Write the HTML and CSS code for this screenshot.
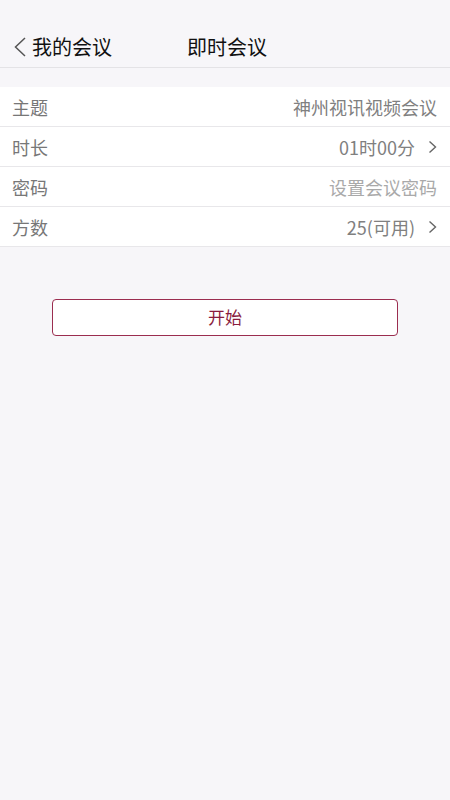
FILE: index.html
```html
<!DOCTYPE html>
<html lang="zh">
<head>
<meta charset="utf-8">
<title>即时会议</title>
<link rel="stylesheet" href="styles.css">
</head>
<body>
<div class="page">
  <header class="nav">
    <div class="back">
      <svg class="back-icon" width="14" height="22" viewBox="0 0 14 22"><path d="M12 2 L2.5 11 L12 20" fill="none" stroke="#555" stroke-width="1.5"/></svg>
      <span>我的会议</span>
    </div>
    <div class="title">即时会议</div>
  </header>
  <div class="list">
    <div class="row"><span class="label">主题</span><span class="value">神州视讯视频会议</span></div>
    <div class="row"><span class="label">时长</span><span class="value">01时00分<svg class="chev" width="9" height="14" viewBox="0 0 9 14"><path d="M1.5 1.5 L7.5 7 L1.5 12.5" fill="none" stroke="#666" stroke-width="1.4"/></svg></span></div>
    <div class="row"><span class="label">密码</span><span class="value placeholder">设置会议密码</span></div>
    <div class="row"><span class="label">方数</span><span class="value">25(可用)<svg class="chev" width="9" height="14" viewBox="0 0 9 14"><path d="M1.5 1.5 L7.5 7 L1.5 12.5" fill="none" stroke="#666" stroke-width="1.4"/></svg></span></div>
  </div>
  <div class="actions">
    <button class="start">开始</button>
  </div>
</div>
</body>
</html>
```

FILE: styles.css
```css
html, body {
  margin: 0;
  padding: 0;
  background: #f7f6f9;
}
body {
  font-family: "Noto Sans CJK SC", "Noto Sans", sans-serif;
  width: 450px;
  height: 800px;
}
.page {
  display: flex;
  flex-direction: column;
}
.nav {
  border-bottom: 1px solid #e4e3e6;
  display: flex;
  align-items: center;
  padding-top: 26px;
  box-sizing: border-box;
  height: 68px;
}
.back {
  display: flex;
  align-items: center;
  padding-left: 13px;
  font-size: 20px;
  color: #111;
  gap: 5px;
}
.back-icon {
  display: block;
}
.title {
  margin-left: 75px;
  font-size: 20px;
  color: #111;
}
.list {
  margin-top: 19px;
  background: #fff;
}
.row {
  height: 39px;
  border-bottom: 1px solid #e8e7ea;
  display: flex;
  align-items: center;
  justify-content: space-between;
  padding: 0 13px 0 12px;
  font-size: 18px;
}
.label {
  color: #777;
}
.value {
  color: #808080;
  display: flex;
  align-items: center;
  gap: 13px;
}
.value.placeholder {
  color: #a9a9a9;
}
.chev {
  display: block;
}
.actions {
  padding: 52px 52px 0 52px;
}
.start {
  width: 100%;
  height: 37px;
  border: 1.5px solid #9b2d4f;
  border-radius: 4px;
  background: #fff;
  color: #8a1c3e;
  font-family: "Noto Sans CJK SC", sans-serif;
  font-size: 17px;
  padding: 0 0 3px 0;
}
```
